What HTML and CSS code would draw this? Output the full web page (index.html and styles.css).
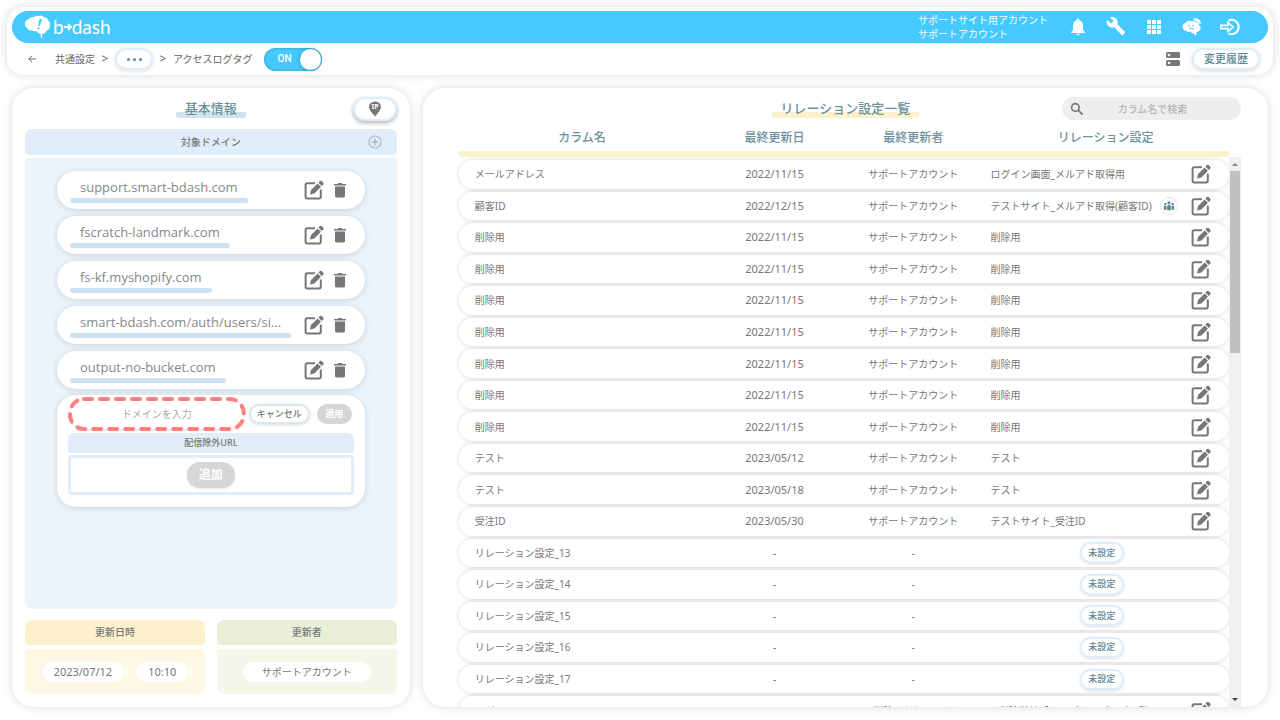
FILE: index.html
```html
<!DOCTYPE html>
<html lang="ja">
<head>
    <meta charset="UTF-8">
    <meta name="viewport" content="width=device-width, initial-scale=1.0">
    <title>アクセスログタグ | b→dash</title>
    <link rel="stylesheet" href="styles.css">
</head>
<body>

    <!-- アイコン定義 -->
    <svg class="icon-defs" aria-hidden="true">
        <symbol id="icon-edit" viewBox="0 0 20 20">
            <path d="M11 3.2H3.2Q1.6 3.2 1.6 4.8V16.8Q1.6 18.4 3.2 18.4H15.2Q16.8 18.4 16.8 16.8V9.600" fill="none" stroke="currentColor" stroke-width="2"/>
            <path d="M6 14.400L7 10L13.600 3.400L17 6.800L10.400 13.400ZM14.400 2.600L16 1Q16.800.4 17.600 1L19.400 2.800Q20 3.600 19.400 4.400L17.800 6Z" fill="currentColor"/>
        </symbol>
        <symbol id="icon-trash" viewBox="0 0 12 15">
            <path d="M0 1H3.5L4.3 0H7.7L8.5 1H12V2.6H0ZM1 3.6H11V13Q11 14.6 9.4 14.6H2.6Q1 14.6 1 13Z" fill="currentColor"/>
        </symbol>
        <symbol id="icon-people" viewBox="0 0 14 12">
            <g fill="currentColor">
                <circle cx="7" cy="2.2" r="1.9"/><circle cx="2.6" cy="3.8" r="1.4"/><circle cx="11.4" cy="3.8" r="1.4"/>
                <path d="M4.8 11V6Q4.8 4.8 7 4.8T9.2 6V11ZM.8 10.4V7Q.8 5.8 2.6 5.8Q4 5.8 4 6.6V10.4ZM13.2 10.4V7Q13.2 5.8 11.4 5.8Q10 5.8 10 6.6V10.4Z"/>
            </g>
        </symbol>
    </svg>

    <header class="header">
        <div class="header-bar">
            <a class="logo" href="#">
                <svg width="27" height="24" viewBox="0 0 27 24" aria-hidden="true">
                    <path d="M1 9Q1 5.5 4.2 4.6Q6.5 1.6 9.8 2.2Q12 .2 15 1Q18-.2 20 2.2Q23.4 2.2 24.2 5.4Q27 7.6 25.8 10.8Q26 14.6 22.6 15.4Q21.6 18.6 18.4 18.8L18 23L16.8 22.6V19Q13.4 18.6 12.4 16Q9.6 17 7.6 15.2Q4.4 16 3.4 13.2Q.8 12 1 9Z" fill="#fff"/>
                    <path d="M15.2 4.6L18.2 4L15.8 11.2L14.2 11Z" fill="#45c9ff"/>
                    <circle cx="14.4" cy="13.4" r="1.1" fill="#45c9ff"/>
                </svg>
                <span>b</span>
                <svg width="8" height="8" viewBox="0 0 8 8" aria-hidden="true"><path d="M0 4H6.4M4 1L7 4L4 7" fill="none" stroke="#fff" stroke-width="1.8"/></svg>
                <span>dash</span>
            </a>
            <div class="account">
                <p>サポートサイト用アカウント</p>
                <p>サポートアカウント</p>
            </div>
            <nav class="header-nav">
                <button aria-label="お知らせ">
                    <svg width="20" height="20" viewBox="0 0 20 20"><path d="M10 1.6Q11.4 1.6 11.4 3.2Q15 4.2 15 8.4V13L16.8 15V16H3.2V15L5 13V8.4Q5 4.2 8.6 3.2Q8.6 1.6 10 1.6ZM8.2 16.8H11.8Q11.6 18.4 10 18.4T8.2 16.8Z" fill="#fff"/></svg>
                </button>
                <button class="raised" aria-label="設定">
                    <svg width="20" height="20" viewBox="0 0 24 24"><path d="M22.7 19l-9.1-9.1c.9-2.3.4-5-1.5-6.900c-2-2-5-2.400-7.400-1.300L9 6 6 9 1.600 4.700C.4 7.100.9 10.100 2.900 12.100c1.900 1.900 4.600 2.400 6.900 1.500l9.100 9.100c.4.4 1 .4 1.400 0l2.300-2.300c.5-.4.5-1.100.1-1.400z" fill="#fff"/></svg>
                </button>
                <button aria-label="アプリ一覧">
                    <svg width="20" height="20" viewBox="0 0 20 20"><path d="M3 3h4v4H3zM8 3h4v4H8zM13 3h4v4h-4zM3 8h4v4H3zM8 8h4v4H8zM13 8h4v4h-4zM3 13h4v4H3zM8 13h4v4H8zM13 13h4v4h-4z" fill="#fff"/></svg>
                </button>
                <button aria-label="サポート">
                    <svg width="20" height="20" viewBox="0 0 20 20">
                        <path d="M.6 10.400Q.2 7 3.400 6Q5.600 3 9 4.200Q11.600 3 13.600 5Q17 5.400 17.200 8.400Q19.600 10 18.200 12.600Q17.600 15 14.600 15L14 19L12 16.400Q9.600 17 8.400 14.600Q6 15.800 4.600 13.800Q1.400 13.600 .6 10.400ZM11 1L15 1.600Q18.600 3 19 6.600L17.400 6.800Q16 4 12.600 3.400Z" fill="#fff"/>
                        <path d="M6 8.200L7.800 9M12 8.200L10.400 9M7 11.800Q9.400 10.400 11.600 11.800" fill="none" stroke="#45c9ff"/>
                    </svg>
                </button>
                <button aria-label="ログアウト">
                    <svg width="20" height="20" viewBox="0 0 20 20" fill="none" stroke="#fff"><path d="M8.600 3.400A7.200 7.200 0 1 1 8.600 16.600" stroke-width="2"/><path d="M.8 8.400H8V5.400L13 10L8 14.600V11.600H.8Z" stroke-width="1.600"/></svg>
                </button>
            </nav>
        </div>
        <div class="sub-bar">
            <nav class="breadcrumb">
                <button class="back-btn" aria-label="戻る">
                    <svg width="8" height="8" viewBox="0 0 8 8"><path d="M8 4H1M4 .8L.8 4L4 7.200" fill="none" stroke="currentColor"/></svg>
                </button>
                <a href="#">共通設定</a>
                <span class="sep">&gt;</span>
                <button class="more-btn" aria-label="階層を表示"><i></i><i></i><i></i></button>
                <span class="sep">&gt;</span>
                <span>アクセスログタグ</span>
            </nav>
            <label class="toggle">
                <input type="checkbox" aria-label="アクセスログタグ" checked>
                <span class="toggle-text">ON</span>
                <span class="toggle-knob"></span>
            </label>
            <button class="server-btn" aria-label="サーバー">
                <svg width="14" height="14" viewBox="0 0 14 14"><rect width="14" height="6" y="0" rx="1.500" fill="currentColor"/><rect width="14" height="6" y="8" rx="1.500" fill="currentColor"/><circle cx="3" cy="3" r="1.300" fill="#fff"/><circle cx="3" cy="11" r="1.300" fill="#fff"/></svg>
            </button>
            <button class="history-btn">変更履歴</button>
        </div>
    </header>

    <main class="main">
        <!-- 基本情報 -->
        <section class="panel info">
            <div class="panel-head">
                <h2 class="title title-blue">基本情報</h2>
                <button class="ip-btn" aria-label="IP設定">
                    <svg width="14" height="16" viewBox="0 0 14 16">
                        <path d="M7 15.400Q1 9 1 6A6 5.600 0 0 1 13 6Q13 9 7 15.400Z" fill="#777"/>
                        <text x="7" y="8" text-anchor="middle" class="ip-text">IP</text>
                    </svg>
                </button>
            </div>
            <div class="domain-head">
                <h3>対象ドメイン</h3>
                <button aria-label="ドメインを追加">
                    <svg width="14" height="14" viewBox="0 0 14 14"><path d="M7 3.600V10.400M3.600 7H10.400" stroke="#adbac4" stroke-width="1.400"/><circle cx="7" cy="7" r="6" fill="none" stroke="#adbac4" stroke-width="1.200"/></svg>
                </button>
            </div>
            <div class="domain-body">
                <ul class="domain-list">
                    <li class="domain-item">
                        <span class="domain-name">support.smart-bdash.com</span>
                        <button aria-label="編集"><svg class="icon-edit"><use href="#icon-edit"/></svg></button>
                        <button aria-label="削除"><svg class="icon-trash"><use href="#icon-trash"/></svg></button>
                    </li>
                    <li class="domain-item">
                        <span class="domain-name">fscratch-landmark.com</span>
                        <button aria-label="編集"><svg class="icon-edit"><use href="#icon-edit"/></svg></button>
                        <button aria-label="削除"><svg class="icon-trash"><use href="#icon-trash"/></svg></button>
                    </li>
                    <li class="domain-item">
                        <span class="domain-name">fs-kf.myshopify.com</span>
                        <button aria-label="編集"><svg class="icon-edit"><use href="#icon-edit"/></svg></button>
                        <button aria-label="削除"><svg class="icon-trash"><use href="#icon-trash"/></svg></button>
                    </li>
                    <li class="domain-item">
                        <span class="domain-name">smart-bdash.com/auth/users/si...</span>
                        <button aria-label="編集"><svg class="icon-edit"><use href="#icon-edit"/></svg></button>
                        <button aria-label="削除"><svg class="icon-trash"><use href="#icon-trash"/></svg></button>
                    </li>
                    <li class="domain-item">
                        <span class="domain-name">output-no-bucket.com</span>
                        <button aria-label="編集"><svg class="icon-edit"><use href="#icon-edit"/></svg></button>
                        <button aria-label="削除"><svg class="icon-trash"><use href="#icon-trash"/></svg></button>
                    </li>
                </ul>
                <form class="domain-form">
                    <div class="form-row">
                        <div class="domain-input">
                            <input type="text" placeholder="ドメインを入力" aria-label="ドメイン">
                            <svg class="focus-frame" aria-hidden="true"><rect width="100%" height="100%" rx="14"/></svg>
                        </div>
                        <button type="button" class="cancel-btn">キャンセル</button>
                        <button type="button" class="apply-btn">適用</button>
                    </div>
                    <h4 class="exclude-head">配信除外URL</h4>
                    <div class="exclude-body">
                        <button type="button" class="add-btn">追加</button>
                    </div>
                </form>
            </div>
            <div class="meta">
                <div class="meta-card yellow">
                    <h3>更新日時</h3>
                    <div class="meta-body">
                        <span class="num">2023/07/12</span>
                        <span class="num">10:10</span>
                    </div>
                </div>
                <div class="meta-card green">
                    <h3>更新者</h3>
                    <div class="meta-body">
                        <span class="wide">サポートアカウント</span>
                    </div>
                </div>
            </div>
        </section>

        <!-- リレーション設定一覧 -->
        <section class="panel relation">
            <div class="panel-head">
                <h2 class="title title-yellow">リレーション設定一覧</h2>
                <label class="search">
                    <svg width="14" height="14" viewBox="0 0 14 14" aria-hidden="true"><circle cx="5.400" cy="5.400" r="3.800" fill="none" stroke="#777" stroke-width="1.600"/><path d="M8.400 8.400L12.600 12.600" stroke="#777" stroke-width="2"/></svg>
                    <input type="text" placeholder="カラム名で検索" aria-label="カラム名で検索">
                </label>
            </div>
            <div class="relation-list">
                <table>
                    <thead>
                        <tr><th>カラム名</th><th>最終更新日</th><th>最終更新者</th><th>リレーション設定</th></tr>
                    </thead>
                    <tbody>
                        <tr><td>メールアドレス</td><td>2022/11/15</td><td>サポートアカウント</td><td><div class="setting"><span>ログイン画面_メルアド取得用</span><button aria-label="編集"><svg class="icon-edit"><use href="#icon-edit"/></svg></button></div></td></tr>
                        <tr><td>顧客ID</td><td>2022/12/15</td><td>サポートアカウント</td><td><div class="setting"><span>テストサイト_メルアド取得(顧客ID)</span><i class="people"><svg width="12" height="10"><use href="#icon-people"/></svg></i><button aria-label="編集"><svg class="icon-edit"><use href="#icon-edit"/></svg></button></div></td></tr>
                        <tr><td>削除用</td><td>2022/11/15</td><td>サポートアカウント</td><td><div class="setting"><span>削除用</span><button aria-label="編集"><svg class="icon-edit"><use href="#icon-edit"/></svg></button></div></td></tr>
                        <tr><td>削除用</td><td>2022/11/15</td><td>サポートアカウント</td><td><div class="setting"><span>削除用</span><button aria-label="編集"><svg class="icon-edit"><use href="#icon-edit"/></svg></button></div></td></tr>
                        <tr><td>削除用</td><td>2022/11/15</td><td>サポートアカウント</td><td><div class="setting"><span>削除用</span><button aria-label="編集"><svg class="icon-edit"><use href="#icon-edit"/></svg></button></div></td></tr>
                        <tr><td>削除用</td><td>2022/11/15</td><td>サポートアカウント</td><td><div class="setting"><span>削除用</span><button aria-label="編集"><svg class="icon-edit"><use href="#icon-edit"/></svg></button></div></td></tr>
                        <tr><td>削除用</td><td>2022/11/15</td><td>サポートアカウント</td><td><div class="setting"><span>削除用</span><button aria-label="編集"><svg class="icon-edit"><use href="#icon-edit"/></svg></button></div></td></tr>
                        <tr><td>削除用</td><td>2022/11/15</td><td>サポートアカウント</td><td><div class="setting"><span>削除用</span><button aria-label="編集"><svg class="icon-edit"><use href="#icon-edit"/></svg></button></div></td></tr>
                        <tr><td>削除用</td><td>2022/11/15</td><td>サポートアカウント</td><td><div class="setting"><span>削除用</span><button aria-label="編集"><svg class="icon-edit"><use href="#icon-edit"/></svg></button></div></td></tr>
                        <tr><td>テスト</td><td>2023/05/12</td><td>サポートアカウント</td><td><div class="setting"><span>テスト</span><button aria-label="編集"><svg class="icon-edit"><use href="#icon-edit"/></svg></button></div></td></tr>
                        <tr><td>テスト</td><td>2023/05/18</td><td>サポートアカウント</td><td><div class="setting"><span>テスト</span><button aria-label="編集"><svg class="icon-edit"><use href="#icon-edit"/></svg></button></div></td></tr>
                        <tr><td>受注ID</td><td>2023/05/30</td><td>サポートアカウント</td><td><div class="setting"><span>テストサイト_受注ID</span><button aria-label="編集"><svg class="icon-edit"><use href="#icon-edit"/></svg></button></div></td></tr>
                        <tr><td>リレーション設定_13</td><td>-</td><td>-</td><td><div class="setting unset"><button class="unset-btn">未設定</button></div></td></tr>
                        <tr><td>リレーション設定_14</td><td>-</td><td>-</td><td><div class="setting unset"><button class="unset-btn">未設定</button></div></td></tr>
                        <tr><td>リレーション設定_15</td><td>-</td><td>-</td><td><div class="setting unset"><button class="unset-btn">未設定</button></div></td></tr>
                        <tr><td>リレーション設定_16</td><td>-</td><td>-</td><td><div class="setting unset"><button class="unset-btn">未設定</button></div></td></tr>
                        <tr><td>リレーション設定_17</td><td>-</td><td>-</td><td><div class="setting unset"><button class="unset-btn">未設定</button></div></td></tr>
                        <tr><td>ログインアドレス</td><td>2021/12/07</td><td>削除されたユーザ</td><td><div class="setting"><span>※削除厳禁【アップセルプレゼン動画</span><button aria-label="編集"><svg class="icon-edit"><use href="#icon-edit"/></svg></button></div></td></tr>
                    </tbody>
                </table>
                <div class="scrollbar" aria-hidden="true">
                    <i class="arrow-up"></i>
                    <i class="thumb"></i>
                    <i class="arrow-down"></i>
                </div>
            </div>
        </section>
    </main>

</body>
</html>
```

FILE: styles.css
```css
* {
    box-sizing: border-box;
    margin: 0;
    padding: 0;
}
body {
    display: flex;
    flex-direction: column;
    gap: 13px;
    height: 100vh;
    padding: 7px 7px 13px;
    overflow: hidden;
    font-family: "Noto Sans", "Noto Sans CJK JP", sans-serif;
    font-size: 10px;
    line-height: 14px;
    color: #777;
    background-color: #fff;
}
button {
    display: flex;
    align-items: center;
    justify-content: center;
    flex-shrink: 0;
    border: none;
    background: none;
    font: inherit;
    color: inherit;
    cursor: pointer;
}
input {
    font: inherit;
    color: inherit;
    border: none;
    background: none;
    outline: none;
}
input::placeholder {
    color: #aaa;
    opacity: 1;
}
a {
    color: inherit;
    text-decoration: none;
}
ul {
    list-style: none;
}
svg {
    display: block;
}
i {
    display: block;
}
.icon-defs {
    position: absolute;
    width: 0;
    height: 0;
}
.icon-edit {
    width: 20px;
    height: 20px;
    color: #777;
}
.icon-trash {
    width: 12px;
    height: 15px;
}

/* ヘッダー */
.header {
    flex-shrink: 0;
    padding: 4px 5px 0;
    border-radius: 16px;
    background-color: #fff;
    box-shadow: 0 0 10px rgba(0, 0, 0, 0.15);
}
.header-bar {
    display: flex;
    align-items: center;
    height: 32px;
    padding: 0 28px 0 12px;
    border-radius: 16px;
    background-color: #45c9ff;
    color: #fff;
}
.logo {
    display: flex;
    align-items: center;
    margin-right: auto;
    font-family: Lato, sans-serif;
    font-size: 19px;
    line-height: 24px;
}
.logo svg:first-child {
    margin-right: 2px;
}
.account {
    width: 150px;
}
.header-nav {
    display: flex;
    gap: 18px;
}
.header-nav button {
    width: 20px;
    height: 20px;
}
.raised {
    align-items: flex-start;
}
.raised svg {
    margin-top: -1px;
}
.sub-bar {
    display: flex;
    align-items: center;
    height: 32px;
    padding: 0 8px 0 16px;
}
.breadcrumb {
    display: flex;
    align-items: center;
    color: #666;
}
.back-btn {
    margin-right: 19px;
}
.sep {
    width: 20px;
    font-size: 12px;
    text-align: center;
}
.more-btn {
    gap: 3px;
    width: 38px;
    height: 22px;
    border: 2px solid #e0edf8;
    border-radius: 11px;
    background-color: #fff;
    box-shadow: 0 1px 4px rgba(0, 0, 0, 0.12);
}
.more-btn i {
    width: 3px;
    height: 3px;
    border-radius: 50%;
    background-color: #5b8793;
}
.toggle {
    display: flex;
    align-items: center;
    justify-content: space-between;
    width: 58px;
    height: 23px;
    margin-left: 11px;
    padding: 0 1px 0 14px;
    border-radius: 12px;
    background-color: #45c9ff;
    box-shadow: inset 0 0 3px rgba(0, 0, 0, 0.3);
    color: #fff;
    cursor: pointer;
}
.toggle input {
    position: absolute;
    opacity: 0;
}
.toggle-text {
    font-family: Roboto, sans-serif;
    font-weight: 500;
}
.toggle-knob {
    width: 21px;
    height: 21px;
    border-radius: 50%;
    background-color: #fff;
    box-shadow: 0 0 4px rgba(0, 0, 0, 0.25);
}
.server-btn {
    margin-left: auto;
}
.history-btn {
    width: 68px;
    height: 22px;
    margin-left: 12px;
    border: 2px solid #e0edf8;
    border-radius: 11px;
    background-color: #fff;
    box-shadow: 0 1px 4px rgba(0, 0, 0, 0.15);
    font-size: 11px;
    font-weight: 500;
    color: #5b8793;
}

/* パネル共通 */
.main {
    display: grid;
    grid-template-columns: 32fr 68fr;
    gap: 13px;
    flex: 1;
    min-height: 0;
    padding: 0 5px;
}
.panel {
    display: flex;
    flex-direction: column;
    min-width: 0;
    min-height: 0;
    border-radius: 22px;
    background-color: #fff;
    box-shadow: 0 0 10px rgba(0, 0, 0, 0.15);
}
.panel-head {
    display: grid;
    grid-template-columns: 1fr auto 1fr;
    align-items: center;
    height: 41px;
}
.title {
    grid-column: 2;
    padding: 0 9px 2px;
    font-size: 13px;
    font-weight: 500;
    line-height: 16px;
    color: #6b919c;
}
.title-blue {
    background: linear-gradient(#d0e1f0, #d0e1f0) left 0 bottom 0 / 100% 6px no-repeat;
    border-radius: 3px;
}
.title-yellow {
    background: linear-gradient(#fdf0cc, #fdf0cc) left 0 bottom 0 / 100% 6px no-repeat;
    border-radius: 3px;
}

/* 基本情報 */
.info {
    padding: 0 13px 13px;
}
.ip-btn {
    justify-self: end;
    width: 44px;
    height: 24px;
    border: 2px solid #e0edf8;
    border-radius: 12px;
    background-color: #fff;
    box-shadow: 0 2px 4px rgba(0, 0, 0, 0.3);
}
.ip-text {
    font-size: 7px;
    font-weight: 700;
    fill: #fff;
}
.domain-head {
    display: grid;
    grid-template-columns: 1fr auto 1fr;
    align-items: center;
    height: 26px;
    padding: 0 15px;
    border-radius: 7px 7px 4px 4px;
    background-color: #e1eef9;
}
.domain-head h3 {
    grid-column: 2;
    font-size: 10px;
    font-weight: 500;
}
.domain-head button {
    justify-self: end;
}
.domain-body {
    flex: 1;
    min-height: 0;
    margin-top: 3px;
    padding: 13px 32px;
    border-radius: 4px 4px 7px 7px;
    background-color: #ebf3fb;
}
.domain-list {
    display: flex;
    flex-direction: column;
    gap: 7px;
}
.domain-item {
    display: flex;
    align-items: center;
    height: 38px;
    padding: 0 19px 0 13px;
    border-radius: 19px;
    background-color: #fff;
    box-shadow: 0 1px 6px rgba(0, 0, 0, 0.14);
}
.domain-name {
    position: relative;
    max-width: 224px;
    padding: 0 10px 7px;
    overflow: hidden;
    font-family: "Open Sans", sans-serif;
    font-size: 13px;
    line-height: 18px;
    white-space: nowrap;
    color: #888;
}
.domain-name::after {
    content: "";
    position: absolute;
    left: 0;
    right: 0;
    bottom: 0;
    height: 5px;
    border-radius: 3px;
    background-color: #d0e1f0;
}
.domain-name + button {
    margin: 0 10px 0 auto;
}
.domain-form {
    margin-top: 6px;
    padding: 3px 11px 12px;
    border-radius: 19px;
    background-color: #fff;
    box-shadow: 0 1px 6px rgba(0, 0, 0, 0.14);
}
.form-row {
    display: flex;
    align-items: center;
    height: 32px;
}
.domain-input {
    position: relative;
    flex: 1;
    height: 30px;
    margin: 0 5px 0 2px;
    min-width: 0;
}
.domain-input input {
    width: 100%;
    height: 30px;
    border-radius: 15px;
    box-shadow: 0 1px 3px rgba(0, 0, 0, 0.15);
    text-align: center;
}
.focus-frame {
    position: absolute;
    top: 0;
    left: 0;
    width: 100%;
    height: 100%;
    overflow: visible;
    pointer-events: none;
    fill: none;
    stroke: #ff8080;
    stroke-width: 4px;
    stroke-linecap: round;
    stroke-dasharray: 8 8;
}
.cancel-btn {
    width: 61px;
    height: 20px;
    border: 2px solid #dce6ec;
    border-radius: 10px;
    box-shadow: 0 1px 3px rgba(0, 0, 0, 0.15);
    font-size: 9px;
    font-weight: 500;
}
.apply-btn {
    width: 35px;
    height: 20px;
    margin: 0 2px 0 7px;
    border-radius: 10px;
    background-color: #d6d6d6;
    font-size: 9px;
    font-weight: 700;
    color: #fff;
}
.exclude-head {
    height: 20px;
    margin-top: 3px;
    border-radius: 6px 6px 3px 3px;
    background-color: #e1eef9;
    font-size: 9px;
    font-weight: 500;
    line-height: 20px;
    text-align: center;
}
.exclude-body {
    display: flex;
    align-items: center;
    justify-content: center;
    height: 40px;
    margin-top: 2px;
    border: 3px solid #e1eef9;
    border-radius: 4px;
}
.add-btn {
    width: 48px;
    height: 26px;
    border-radius: 13px;
    background-color: #d6d6d6;
    box-shadow: 0 1px 3px rgba(0, 0, 0, 0.1);
    font-size: 12px;
    font-weight: 700;
    color: #fff;
}
.meta {
    display: grid;
    grid-template-columns: 1fr 1fr;
    gap: 12px;
    margin-top: 11px;
}
.meta-card h3 {
    height: 25px;
    border-radius: 7px 7px 4px 4px;
    font-size: 10px;
    font-weight: 500;
    line-height: 25px;
    text-align: center;
}
.meta-body {
    display: flex;
    align-items: center;
    justify-content: center;
    gap: 12px;
    height: 45px;
    margin-top: 4px;
    border-radius: 4px 4px 7px 7px;
}
.meta-body span {
    padding: 0 12px;
    border-radius: 10px;
    background-color: #fff;
    line-height: 20px;
}
.meta-body .num {
    font-size: 11px;
}
.meta-body .wide {
    padding: 0 19px;
}
.yellow h3 {
    background-color: #fcf0cd;
}
.yellow .meta-body {
    background-color: #fef8e5;
}
.green h3 {
    background-color: #eaefd8;
}
.green .meta-body {
    background-color: #f6f7eb;
}

/* リレーション設定一覧 */
.relation {
    padding: 0 27px;
    overflow: hidden;
}
.relation .panel-head {
    flex-shrink: 0;
}
.search {
    display: flex;
    align-items: center;
    justify-self: end;
    width: 179px;
    height: 23px;
    padding: 0 20px 0 8px;
    border-radius: 12px;
    background-color: #eee;
}
.search input {
    flex: 1;
    min-width: 0;
    text-align: center;
}
.relation-list {
    display: flex;
    flex: 1;
    min-height: 0;
    margin-left: 9px;
}
table {
    flex: 1;
    height: 602px;
    table-layout: fixed;
    border-collapse: separate;
    border-spacing: 0 3px;
    margin-top: -3px;
}
th {
    width: 18%;
    height: 28px;
    padding-bottom: 10px;
    background: linear-gradient(#fdf0cc, #fdf0cc) left 0 bottom 0 / 100% 6px no-repeat;
    font-size: 12px;
    font-weight: 500;
    color: #6b919c;
}
th:first-child,
th:last-child {
    width: 32%;
}
th:first-child {
    border-bottom-left-radius: 3px;
}
th:last-child {
    border-bottom-right-radius: 3px;
}
tbody tr {
    border-radius: 15px;
    box-shadow: 0 0 4px rgba(0, 0, 0, 0.18);
}
td {
    background-color: #fff;
    text-align: center;
    white-space: nowrap;
}
td:first-child {
    padding-left: 16px;
    border-radius: 15px 0 0 15px;
    text-align: left;
}
td:nth-child(2) {
    font-size: 11px;
}
td:last-child {
    border-radius: 0 15px 15px 0;
}
.setting {
    display: flex;
    align-items: center;
    height: 22px;
    padding: 0 18px 0 8px;
}
.setting button {
    margin-left: auto;
}
.setting.unset {
    justify-content: center;
    padding: 0 8px 0 0;
}
.setting .unset-btn {
    width: 44px;
    height: 21px;
    margin: 0;
    border: 2px solid #e0edf8;
    border-radius: 11px;
    box-shadow: 0 1px 3px rgba(0, 0, 0, 0.15);
    font-size: 9px;
    font-weight: 500;
    color: #5b8793;
}
.people {
    display: flex;
    align-items: center;
    justify-content: center;
    width: 18px;
    height: 18px;
    margin-left: 8px;
    border: 1px solid #d9eafa;
    border-radius: 50%;
    color: #5b8793;
}
.scrollbar {
    display: flex;
    flex-direction: column;
    align-items: center;
    width: 12px;
    margin-top: 28px;
    padding: 6px 0;
    background-color: #f1f1f1;
}
.arrow-up {
    border: 3px solid transparent;
    border-top-width: 0;
    border-bottom-color: #888;
}
.thumb {
    width: 10px;
    height: 182px;
    margin-top: 5px;
    background-color: #c1c1c1;
}
.arrow-down {
    margin-top: auto;
    border: 3px solid transparent;
    border-bottom-width: 0;
    border-top-color: #444;
}
```
